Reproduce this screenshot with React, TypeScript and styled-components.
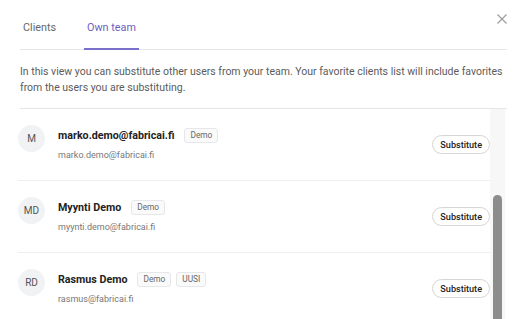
import React from "react";
import styled, { createGlobalStyle } from "styled-components";

const GlobalStyle = createGlobalStyle`
  html, body { margin: 0; padding: 0; background: #fff; overflow: hidden; }
  body { font-family: Roboto, "Noto Sans", sans-serif; color: #222; }
  * { box-sizing: border-box; }
`;

const Modal = styled.div`
  position: relative;
  height: 100vh;
  overflow: hidden;
  padding: 0 16px 0 20px;
  display: flex;
  flex-direction: column;
`;

const CloseButton = styled.button`
  position: absolute;
  top: 14px;
  right: 16px;
  width: 10px;
  height: 10px;
  padding: 0;
  border: 0;
  background: none;
  display: flex;
  cursor: pointer;
`;

const TabBar = styled.div`
  display: flex;
  gap: 25px;
  margin-top: 18px;
  border-bottom: 1px solid #e6e6e6;
`;

const Tab = styled.div<{ $active?: boolean }>`
  padding: 0 3px 10px;
  margin-bottom: -1px;
  font-size: 10.8px;
  line-height: 20px;
  color: ${(p) => (p.$active ? "#6a5fc1" : "#666")};
  border-bottom: 2px solid ${(p) => (p.$active ? "#7a6fc9" : "transparent")};
`;

const Description = styled.p`
  margin: 14px 0 0;
  padding-bottom: 12px;
  font-size: 10.5px;
  line-height: 16px;
  color: #5c5c5c;
  white-space: nowrap;
  border-bottom: 1px solid #e6e6e6;
`;

const ListArea = styled.div`
  flex: 1;
  min-height: 0;
  display: flex;
  margin-left: -2px;
  padding-right: 2px;
`;

const Rows = styled.div`
  flex: 1;
  display: flex;
  flex-direction: column;
`;

const ScrollTrack = styled.div`
  width: 15px;
  flex-shrink: 0;
  padding: 86px 3px 0;
  background: #f7f7f7;
  display: flex;
`;

const ScrollThumb = styled.div`
  flex: 1;
  border-radius: 5px 5px 0 0;
  background: #8c8c8c;
`;

const Row = styled.div`
  display: flex;
  align-items: flex-start;
  flex-shrink: 0;
  height: 72px;
  padding-top: 17px;
  border-bottom: 1px solid #efefef;
`;

const Avatar = styled.div`
  width: 27px;
  height: 27px;
  margin-top: -1px;
  flex-shrink: 0;
  border-radius: 50%;
  background: #f1f2f4;
  color: #555;
  font-size: 10px;
  display: flex;
  align-items: center;
  justify-content: center;
`;

const Info = styled.div`
  flex: 1;
  margin-left: 13px;
  display: flex;
  flex-direction: column;
  gap: 4px;
`;

const NameLine = styled.div`
  display: flex;
  align-items: center;
  height: 18px;
  gap: 5px;
`;

const Name = styled.span`
  font-weight: 700;
  font-size: 10.7px;
  color: #222;
  margin-right: 5px;
`;

const Tag = styled.span`
  height: 15px;
  padding: 0 5px;
  border: 1px solid #e6e7ea;
  border-radius: 3px;
  background: #fafafb;
  color: #666;
  font-size: 8.3px;
  line-height: 13px;
`;

const Email = styled.div`
  font-size: 9px;
  line-height: 15px;
  color: #777;
`;

const SubstituteButton = styled.button`
  align-self: center;
  margin-top: -17px;
  height: 19px;
  padding: 0 7px;
  border: 1px solid #d6d6d6;
  border-radius: 10px;
  background: #fff;
  color: #222;
  font-family: inherit;
  font-weight: 500;
  font-size: 9.1px;
  cursor: pointer;
`;

type User = { initials: string; name: string; email: string; tags: string[] };

const users: User[] = [
  { initials: "M", name: "marko.demo@fabricai.fi", email: "marko.demo@fabricai.fi", tags: ["Demo"] },
  { initials: "MD", name: "Myynti Demo", email: "myynti.demo@fabricai.fi", tags: ["Demo"] },
  { initials: "RD", name: "Rasmus Demo", email: "rasmus@fabricai.fi", tags: ["Demo", "UUSI"] },
];

export default function App() {
  return (
    <>
      <GlobalStyle />
      <Modal>
        <CloseButton aria-label="Close">
          <svg width="10" height="10" viewBox="0 0 10 10">
            <path d="M0.5 0.5L9.5 9.5M9.5 0.5L0.5 9.5" stroke="#9a9a9a" strokeWidth="1.1" />
          </svg>
        </CloseButton>
        <TabBar>
          <Tab>Clients</Tab>
          <Tab $active>Own team</Tab>
        </TabBar>
        <Description>
          In this view you can substitute other users from your team. Your favorite clients list will include favorites
          <br />
          from the users you are substituting.
        </Description>
        <ListArea>
          <Rows>
            {users.map((u) => (
              <Row key={u.email}>
                <Avatar>{u.initials}</Avatar>
                <Info>
                  <NameLine>
                    <Name>{u.name}</Name>
                    {u.tags.map((t) => (
                      <Tag key={t}>{t}</Tag>
                    ))}
                  </NameLine>
                  <Email>{u.email}</Email>
                </Info>
                <SubstituteButton>Substitute</SubstituteButton>
              </Row>
            ))}
          </Rows>
          <ScrollTrack>
            <ScrollThumb />
          </ScrollTrack>
        </ListArea>
      </Modal>
    </>
  );
}
